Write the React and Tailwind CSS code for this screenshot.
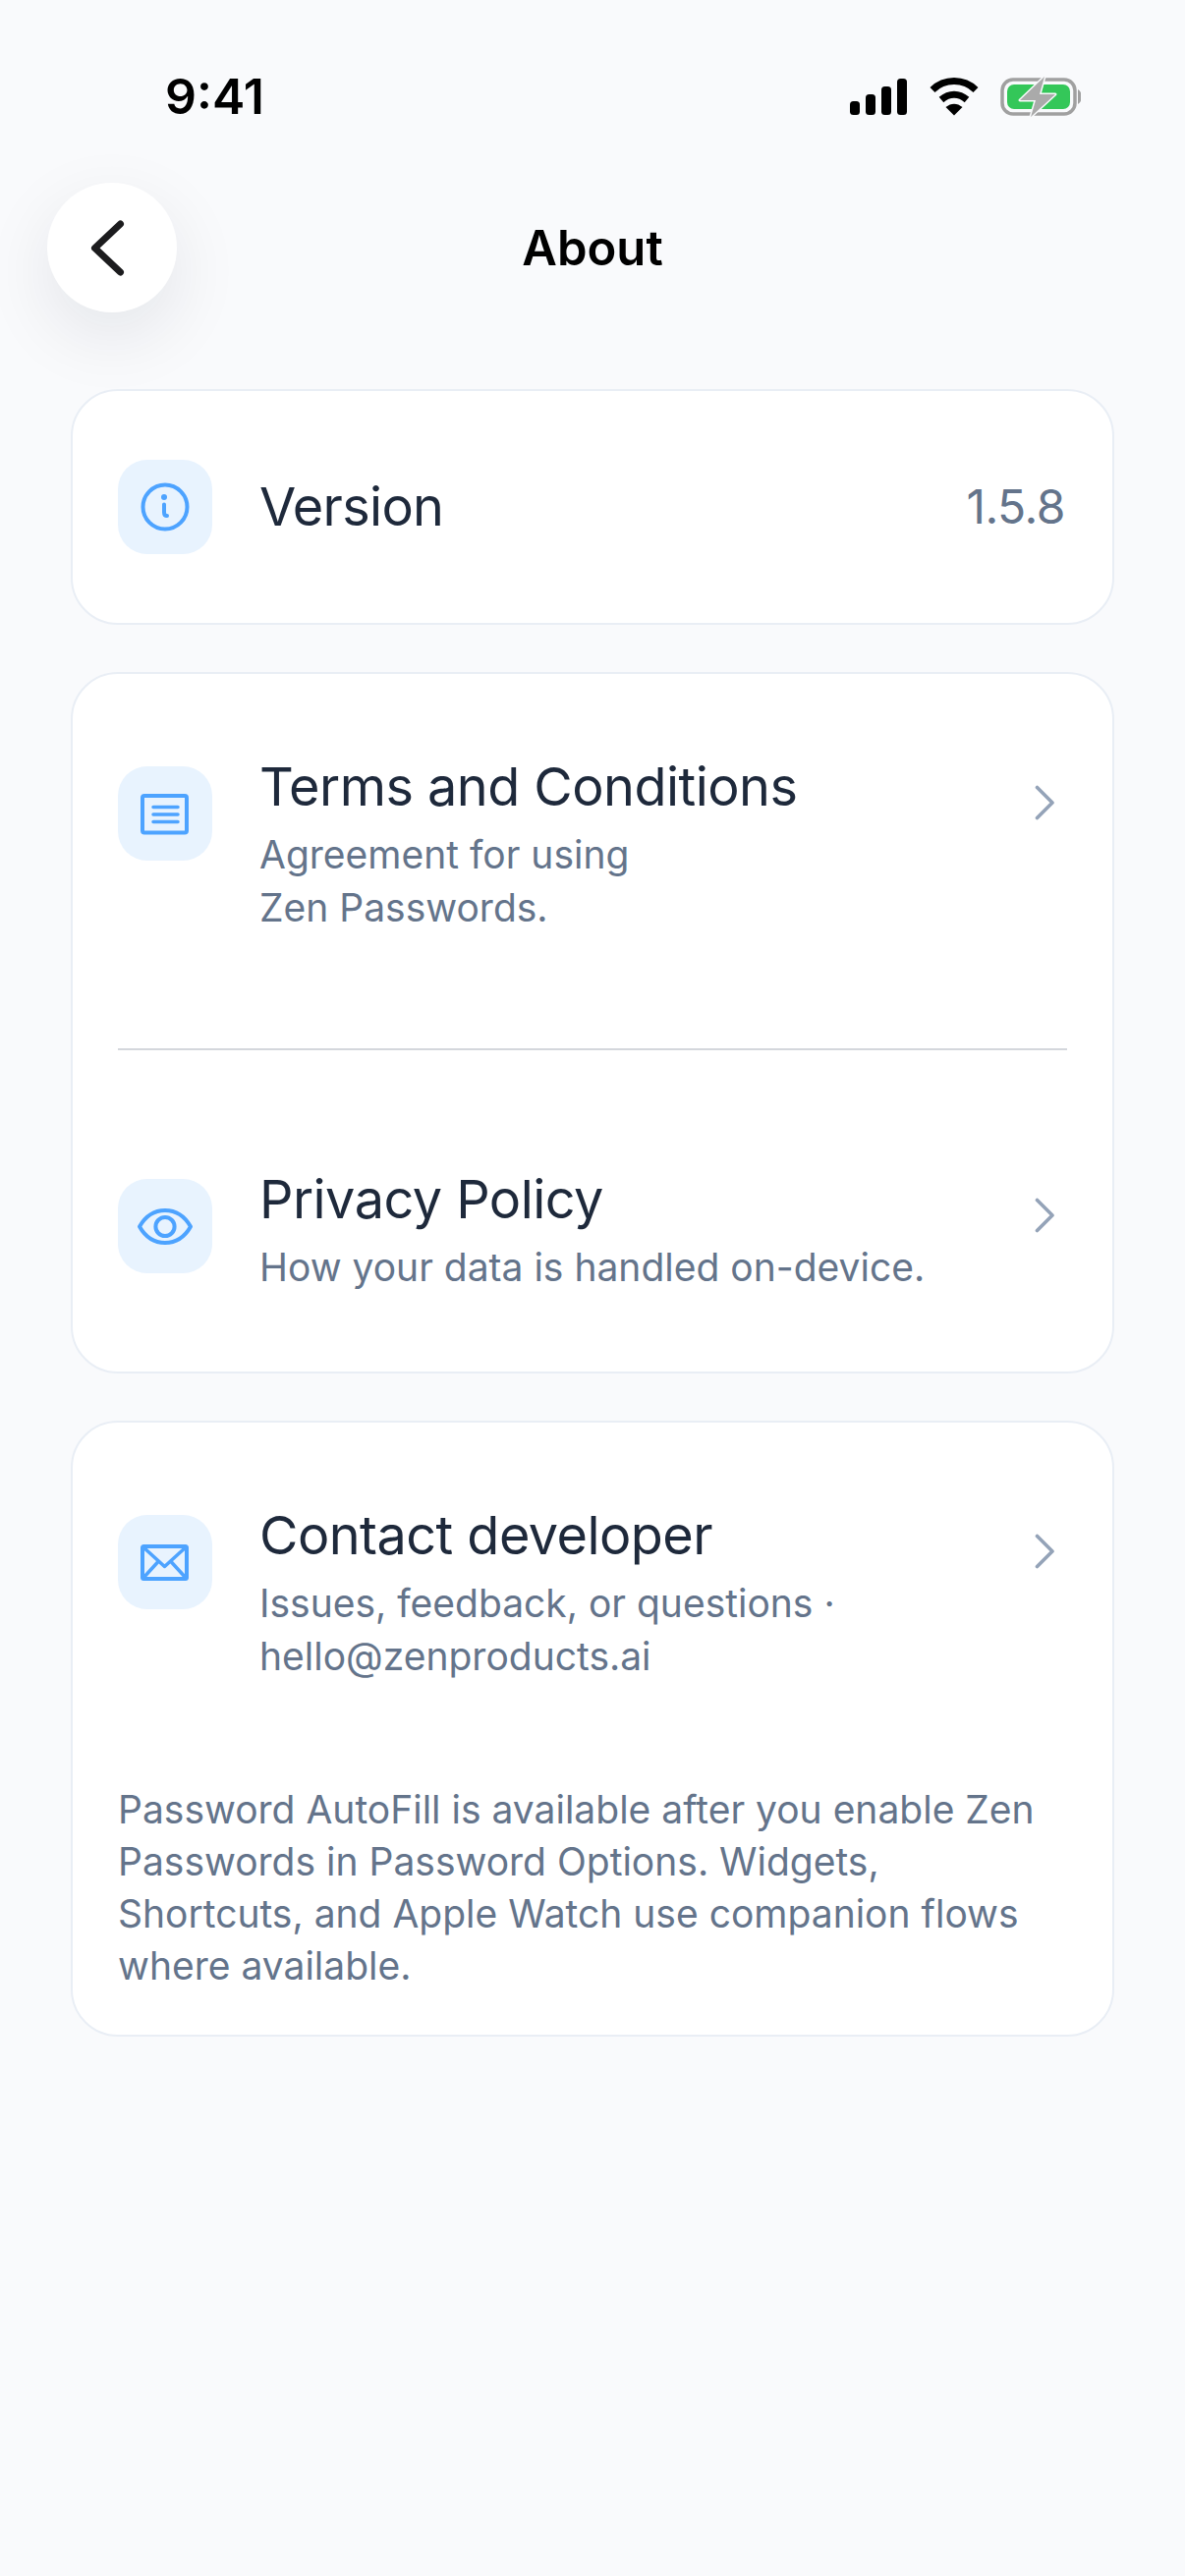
const font = { fontFamily: 'Inter, "Noto Sans", sans-serif' }

function StatusIcons() {
  return (
    <svg width="235" height="45" viewBox="0 0 235 45" fill="none">
      {/* signal */}
      <rect x="0" y="27" width="10" height="14" rx="3.5" fill="#000" />
      <rect x="16" y="20" width="10" height="21" rx="3.5" fill="#000" />
      <rect x="32" y="12" width="10" height="29" rx="3.5" fill="#000" />
      <rect x="48" y="4" width="10" height="37" rx="3.5" fill="#000" />
      {/* wifi */}
      <path d="M84 15.5C96 3.5 116 3.5 128 15.5" stroke="#000" strokeWidth="7" />
      <path d="M93 25.5C101 18.5 111 18.5 119 25.5" stroke="#000" strokeWidth="7" />
      <path d="M97.5 33C103 28.5 109 28.5 114.5 33L106 41.5Z" fill="#000" />
      {/* battery */}
      <rect x="155" y="5" width="74" height="35" rx="11" stroke="#a0a0a0" strokeWidth="3.5" />
      <rect x="160" y="10" width="64" height="25" rx="7" fill="#34c759" />
      <path d="M233 17C235 18.5 235 26.5 233 28Z" fill="#a0a0a0" stroke="#a0a0a0" strokeWidth="2" />
      <path d="M198 2L173 26H189L184 43L209 20H193Z" fill="#aaaaaa" stroke="#f9fafc" strokeWidth="3" strokeLinejoin="round" paintOrder="stroke" />
    </svg>
  )
}

function InfoIcon() {
  return (
    <svg width="96" height="96" viewBox="0 0 96 96" fill="none" stroke="#4da3ff" strokeLinecap="round">
      <circle cx="48" cy="48" r="22.5" strokeWidth="4" />
      <circle cx="47" cy="38" r="3" fill="#4da3ff" stroke="none" />
      <path d="M47 45.5V53.5C47 56 48 57 50 57" strokeWidth="4" />
    </svg>
  )
}

function DocIcon() {
  return (
    <svg width="96" height="96" viewBox="0 0 96 96" fill="none" stroke="#4da3ff" strokeLinecap="round">
      <rect x="25" y="30" width="45" height="37.5" rx="2" strokeWidth="4" />
      <path d="M36 41.5H61M36 49H61M36 56.5H61" strokeWidth="3.5" />
    </svg>
  )
}

function EyeIcon() {
  return (
    <svg width="96" height="96" viewBox="0 0 96 96" fill="none" stroke="#4da3ff" strokeLinejoin="round">
      <path d="M22 48.5C28 38 37 32 48 32C59 32 68 38 74 48.5C68 59 59 65 48 65C37 65 28 59 22 48.5Z" strokeWidth="4" />
      <circle cx="48" cy="48.5" r="9.6" strokeWidth="4" />
    </svg>
  )
}

function MailIcon() {
  return (
    <svg width="96" height="96" viewBox="0 0 96 96" fill="none" stroke="#4da3ff" strokeLinecap="round" strokeLinejoin="round">
      <rect x="25" y="32" width="45" height="33" rx="1.5" strokeWidth="4" />
      <path d="M25.5 32.5L47.5 52.5L69.5 32.5M25.5 64.5L41 47.5M69.5 64.5L54 47.5" strokeWidth="3.5" />
    </svg>
  )
}

function IconBox({ children, className = '' }) {
  return (
    <div className={`w-24 h-24 shrink-0 rounded-[30px] bg-[#e8f3fe] flex items-center justify-center ${className}`}>
      {children}
    </div>
  )
}

function Chevron() {
  return (
    <svg className="mt-[31px] mr-[13px] shrink-0" width="20" height="36" viewBox="0 0 20 36" fill="none">
      <path d="M2.5 2.5L18 18L2.5 33.5" stroke="#94a3b8" strokeWidth="3.6" strokeLinecap="round" strokeLinejoin="round" />
    </svg>
  )
}

function LinkRow({ icon, title, lines, className = '' }) {
  return (
    <div className={`flex items-start ${className}`}>
      <IconBox className="mt-[12px]">{icon}</IconBox>
      <div className="ml-12 flex-1">
        <div className="text-[54px] leading-[66px] tracking-[-0.54px] text-[#1e293b]">{title}</div>
        <div className="mt-[9px] text-[39px] leading-[54px] text-[#64748b]">
          {lines.map((l) => (
            <div key={l}>{l}</div>
          ))}
        </div>
      </div>
      <Chevron />
    </div>
  )
}

export default function App() {
  return (
    <div className="min-h-[2622px] bg-[#f9fafc]" style={font}>
      {/* Status bar */}
      <div className="flex items-center justify-between h-[52px] pt-[72px] box-content pl-[168px] pr-[106px]">
        <span className="text-[50px] leading-[52px] font-semibold text-black">9:41</span>
        <StatusIcons />
      </div>

      {/* Header */}
      <div className="grid grid-cols-[132px_1fr_132px] items-center px-12 mt-[62px]">
        <button className="w-[132px] h-[132px] rounded-full bg-white shadow-[0_24px_72px_rgba(15,23,42,0.09)] flex items-center justify-center">
          <svg width="132" height="132" viewBox="0 0 132 132" fill="none">
            <path d="M74.5 42L48.5 66.5L74.5 91" stroke="#1c1c1e" strokeWidth="7" strokeLinecap="round" strokeLinejoin="round" />
          </svg>
        </button>
        <h1 className="text-center text-[49px] leading-[60px] pt-[1px] font-semibold text-black">About</h1>
        <div />
      </div>

      <div className="mx-[72px] mt-[78px] flex flex-col gap-12">
        {/* Version */}
        <div className="h-[240px] bg-white border-2 border-[#e9eef5] rounded-[48px] px-[46px] flex items-center">
          <IconBox>
            <InfoIcon />
          </IconBox>
          <div className="ml-12 flex-1 text-[54px] leading-[66px] tracking-[-0.7px] text-[#1e293b]">Version</div>
          <div className="mr-[2px] text-[48px] leading-[60px] tracking-[-0.48px] text-[#64748b]">1.5.8</div>
        </div>

        {/* Legal */}
        <div className="h-[714px] bg-white border-2 border-[#e9eef5] rounded-[48px] px-[46px] pt-[82px]">
          <LinkRow
            icon={<DocIcon />}
            title="Terms and Conditions"
            lines={['Agreement for using', 'Zen Passwords.']}
          />
          <div className="h-[2px] bg-[#d4d7dc] mt-[116px] mb-[119px]" />
          <LinkRow
            icon={<EyeIcon />}
            title="Privacy Policy"
            lines={['How your data is handled on-device.']}
          />
        </div>

        {/* Contact */}
        <div className="h-[627px] bg-white border-2 border-[#e9eef5] rounded-[48px] px-[46px] pt-[82px]">
          <LinkRow
            icon={<MailIcon />}
            title="Contact developer"
            lines={['Issues, feedback, or questions ·', 'hello@zenproducts.ai']}
          />
          <p className="mt-[102px] text-[39px] leading-[53px] text-[#64748b]">
            Password AutoFill is available after you enable Zen
            <br />
            Passwords in Password Options. Widgets,
            <br />
            Shortcuts, and Apple Watch use companion flows
            <br />
            where available.
          </p>
        </div>
      </div>
    </div>
  )
}
